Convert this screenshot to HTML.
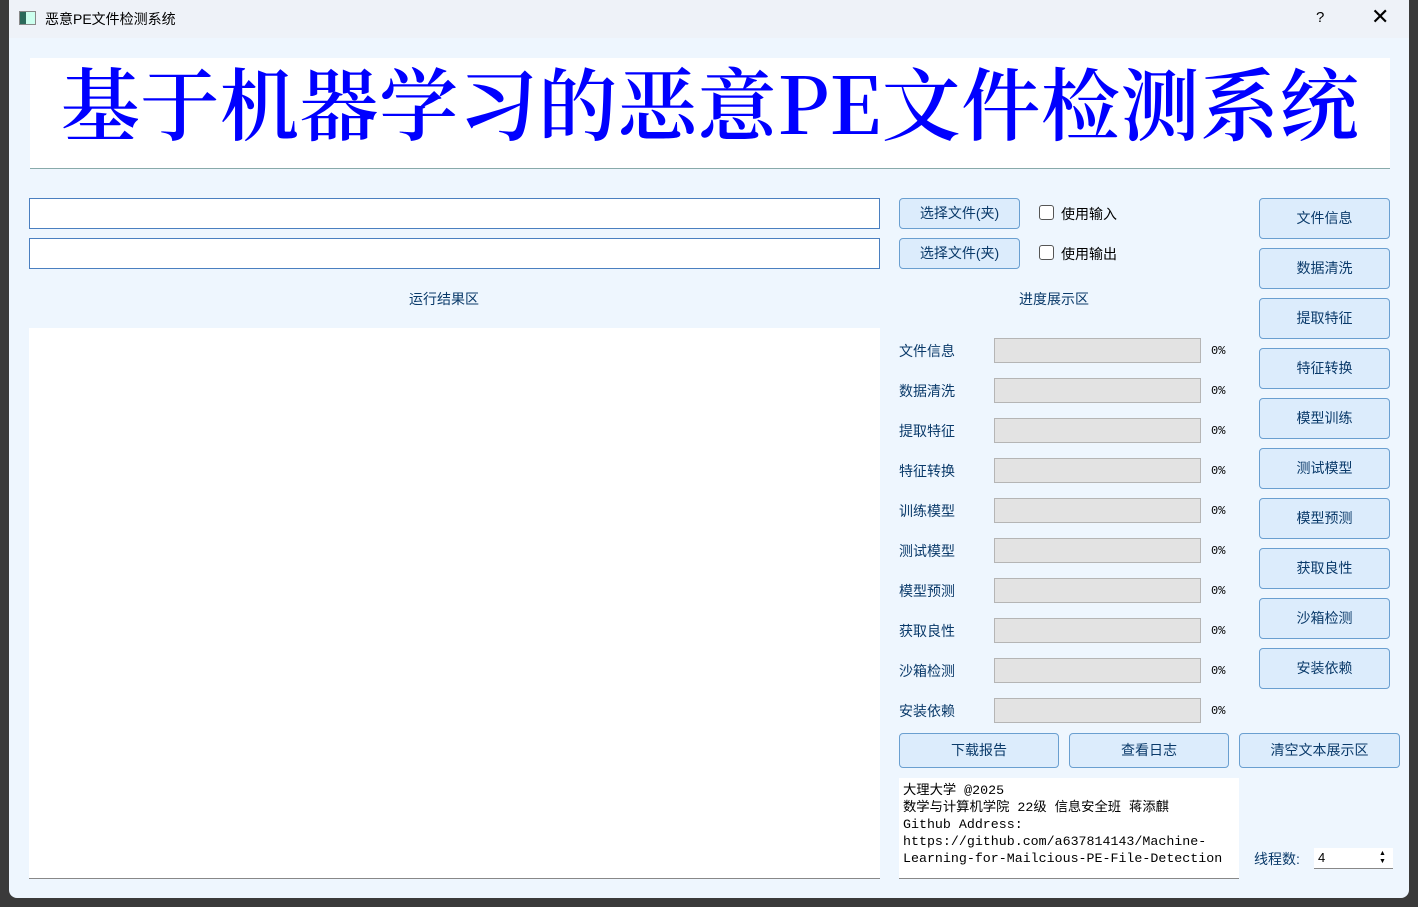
<!DOCTYPE html>
<html><head><meta charset="utf-8"><style>
*{margin:0;padding:0;box-sizing:border-box}
body{width:1418px;height:907px;background:#3a3a3a;position:relative;overflow:hidden;font-family:"Liberation Sans","Noto Sans CJK SC",sans-serif;font-size:14px;color:#0a3a6a}
.win{position:absolute;left:9px;top:0;width:1400px;height:898px;background:#eef6fe;border-radius:0 0 8px 8px}
.tb{position:absolute;left:0;top:0;width:1400px;height:38px;background:#eef2f8;color:#000}
.a{position:absolute}
.banner{left:21px;top:58px;width:1360px;height:111px;background:#fff;border-bottom:1px solid #8aa;}
.banner div{position:absolute;left:0;right:0;top:-8px;text-align:center;color:#0000ff;font-family:"Noto Serif CJK SC","Liberation Serif",serif;font-size:79px;font-weight:600;line-height:100px;white-space:nowrap;letter-spacing:0.6px}
.inp{background:#fff;border:1px solid #4a7fc0}
.btn{background:#dcecfc;border:1px solid #6a9fd0;border-radius:4px;text-align:center;color:#0a3a6a;font-size:14px}
.cb{width:15px;height:15px;border:1px solid #555;border-radius:3px;background:#fff}
.bar{background:#e3e3e3;border:1px solid #b5b5b5}
.pct{font-size:12px;font-family:"Liberation Mono",monospace;color:#000}
</style></head><body>
<div class="win">
<div class="tb">
<div class="a" style="left:10px;top:11px;width:17px;height:14px;border:1px solid #888;background:linear-gradient(90deg,#2a6a5a 40%,#cfe 40%)"></div>
<div class="a" style="left:36px;top:9px;font-size:14px">恶意PE文件检测系统</div>
<div class="a" style="left:1307px;top:9px;font-size:15px">?</div>
<div class="a" style="left:1362px;top:4px;font-size:22px;font-weight:300">✕</div>
</div>
<div class="a banner"><div>基于机器学习的恶意PE文件检测系统</div></div>
<div class="a inp" style="left:20px;top:198px;width:851px;height:31px"></div>
<div class="a inp" style="left:20px;top:238px;width:851px;height:31px"></div>
<div class="a btn" style="left:890px;top:198px;width:121px;height:31px;line-height:29px">选择文件(夹)</div>
<div class="a btn" style="left:890px;top:238px;width:121px;height:31px;line-height:29px">选择文件(夹)</div>
<div class="a cb" style="left:1030px;top:205px"></div><div class="a" style="left:1052px;top:204px;color:#000">使用输入</div>
<div class="a cb" style="left:1030px;top:245px"></div><div class="a" style="left:1052px;top:244px;color:#000">使用输出</div>
<div class="a" style="left:400px;top:289px">运行结果区</div>
<div class="a" style="left:1010px;top:289px">进度展示区</div>
<div class="a" style="left:20px;top:328px;width:851px;height:551px;background:#fff;border-bottom:1px solid #888"></div>

<div class="a" style="left:890px;top:341px">文件信息</div><div class="a bar" style="left:985px;top:338px;width:207px;height:25px"></div><div class="a pct" style="left:1202px;top:344px">0%</div>
<div class="a" style="left:890px;top:381px">数据清洗</div><div class="a bar" style="left:985px;top:378px;width:207px;height:25px"></div><div class="a pct" style="left:1202px;top:384px">0%</div>
<div class="a" style="left:890px;top:421px">提取特征</div><div class="a bar" style="left:985px;top:418px;width:207px;height:25px"></div><div class="a pct" style="left:1202px;top:424px">0%</div>
<div class="a" style="left:890px;top:461px">特征转换</div><div class="a bar" style="left:985px;top:458px;width:207px;height:25px"></div><div class="a pct" style="left:1202px;top:464px">0%</div>
<div class="a" style="left:890px;top:501px">训练模型</div><div class="a bar" style="left:985px;top:498px;width:207px;height:25px"></div><div class="a pct" style="left:1202px;top:504px">0%</div>
<div class="a" style="left:890px;top:541px">测试模型</div><div class="a bar" style="left:985px;top:538px;width:207px;height:25px"></div><div class="a pct" style="left:1202px;top:544px">0%</div>
<div class="a" style="left:890px;top:581px">模型预测</div><div class="a bar" style="left:985px;top:578px;width:207px;height:25px"></div><div class="a pct" style="left:1202px;top:584px">0%</div>
<div class="a" style="left:890px;top:621px">获取良性</div><div class="a bar" style="left:985px;top:618px;width:207px;height:25px"></div><div class="a pct" style="left:1202px;top:624px">0%</div>
<div class="a" style="left:890px;top:661px">沙箱检测</div><div class="a bar" style="left:985px;top:658px;width:207px;height:25px"></div><div class="a pct" style="left:1202px;top:664px">0%</div>
<div class="a" style="left:890px;top:701px">安装依赖</div><div class="a bar" style="left:985px;top:698px;width:207px;height:25px"></div><div class="a pct" style="left:1202px;top:704px">0%</div>

<div class="a btn" style="left:1250px;top:198px;width:131px;height:41px;line-height:39px">文件信息</div>
<div class="a btn" style="left:1250px;top:248px;width:131px;height:41px;line-height:39px">数据清洗</div>
<div class="a btn" style="left:1250px;top:298px;width:131px;height:41px;line-height:39px">提取特征</div>
<div class="a btn" style="left:1250px;top:348px;width:131px;height:41px;line-height:39px">特征转换</div>
<div class="a btn" style="left:1250px;top:398px;width:131px;height:41px;line-height:39px">模型训练</div>
<div class="a btn" style="left:1250px;top:448px;width:131px;height:41px;line-height:39px">测试模型</div>
<div class="a btn" style="left:1250px;top:498px;width:131px;height:41px;line-height:39px">模型预测</div>
<div class="a btn" style="left:1250px;top:548px;width:131px;height:41px;line-height:39px">获取良性</div>
<div class="a btn" style="left:1250px;top:598px;width:131px;height:41px;line-height:39px">沙箱检测</div>
<div class="a btn" style="left:1250px;top:648px;width:131px;height:41px;line-height:39px">安装依赖</div>

<div class="a btn" style="left:890px;top:733px;width:160px;height:35px;line-height:33px">下载报告</div>
<div class="a btn" style="left:1060px;top:733px;width:160px;height:35px;line-height:33px">查看日志</div>
<div class="a btn" style="left:1230px;top:733px;width:161px;height:35px;line-height:33px">清空文本展示区</div>

<div class="a" style="left:890px;top:778px;width:340px;height:101px;background:#fff;border-bottom:1px solid #888;padding:4px 4px;font-family:'Liberation Mono','Noto Sans CJK SC',monospace;font-size:13.3px;line-height:17px;color:#000;white-space:pre">大理大学 @2025
数学与计算机学院 22级 信息安全班 蒋添麒
Github Address:
https://github.com/a637814143/Machine-
Learning-for-Mailcious-PE-File-Detection</div>
<div class="a" style="left:1245px;top:849px">线程数:</div>
<div class="a" style="left:1305px;top:848px;width:79px;height:21px;background:#fff;border-bottom:1px solid #888;font-size:13px;color:#000;padding:2px 4px">4</div>
<div class="a" style="left:1370px;top:850px;font-size:7px;line-height:8px;color:#000">▲<br>▼</div>
</div>
</body></html>
